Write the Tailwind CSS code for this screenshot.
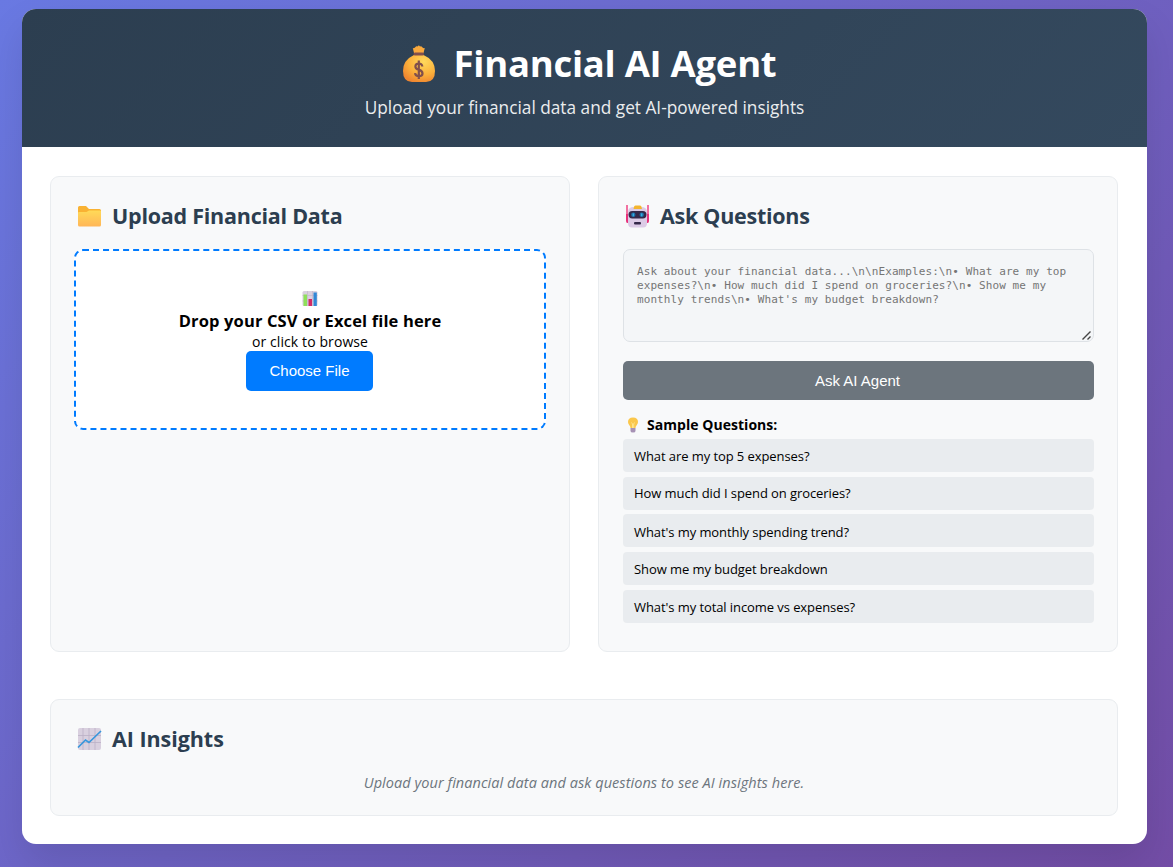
<!DOCTYPE html>
<html lang="en">
<head>
<meta charset="utf-8">
<title>Financial AI Agent</title>
<script src="https://cdn.jsdelivr.net/npm/@tailwindcss/browser@4"></script>
</head>
<body class="h-[867px] overflow-hidden bg-[linear-gradient(135deg,#6979e2_0%,#734da6_100%)] px-[22px] pt-[9px] font-['Open_Sans','Noto_Sans',sans-serif] text-black">
<main class="mr-[4px] h-[835px] overflow-hidden rounded-[14px] bg-white shadow-[0_19px_38px_rgba(0,0,0,0.1)]">
  <header class="h-[138px] bg-[linear-gradient(135deg,#2c3e50,#34495e)] pt-[28px] text-center text-white">
    <h1 class="flex h-[52px] items-center justify-center pl-[9px] text-[36.500px] leading-[52px] font-bold tracking-[-0.27px] whitespace-nowrap">
      <svg class="mt-px mr-[18px] h-[38px] w-[34px] shrink-0" viewBox="0 0 34 38">
        <defs><radialGradient id="bag" cx=".65" cy=".25" r=".8"><stop offset="0" stop-color="#ffd95c"/><stop offset=".6" stop-color="#fbb03b"/><stop offset="1" stop-color="#ef8630"/></radialGradient></defs>
        <path d="M12 8 10.800 3Q12.500 3.500 13.500 2Q14 .8 15.500 1.500Q16.800-.4 18 1.500Q19.500.8 20 2Q21 3.500 22.800 3L21.500 8Z" fill="#f9a93d"/>
        <path d="M12 10Q1 15 1 26Q1 37 10 37H24Q33 37 33 26Q33 15 21.500 10Z" fill="url(#bag)"/>
        <rect x="11.500" y="7.500" width="10.500" height="3" rx="1.500" fill="#81504c"/>
        <path d="M20.300 21.500Q20 18.500 16.800 18.500Q13.400 18.500 13.400 21.500Q13.400 24 16.800 24.800Q20.500 25.500 20.500 28.500Q20.500 31.200 17 31.200Q13.400 31.200 13 28.200M16.800 15.500V34" fill="none" stroke="#81504c" stroke-width="2.200"/>
      </svg>
      <span>Financial AI Agent</span>
    </h1>
    <p class="mt-[6px] text-[17.250px] leading-[25px] opacity-90">Upload your financial data and get AI-powered insights</p>
  </header>
  <div class="pt-[29px] pr-[29px] pl-[28px]">
    <div class="grid h-[476px] grid-cols-2 gap-[28px]">
      <section class="rounded-[9px] border border-[#e9ecef] bg-[#f8f9fa] px-[23px] pt-[23px]">
        <h2 class="flex h-[32px] items-center text-[21.500px] leading-8 font-bold tracking-[-0.24px] text-[#2c3e50]">
          <svg class="mr-[10px] ml-[3px] h-[24px] w-[25px]" viewBox="0 0 25 24"><defs><linearGradient id="fold" x2="0" y2="1"><stop stop-color="#ffda58"/><stop offset="1" stop-color="#ffb657"/></linearGradient></defs><path d="M1 3.500Q1 2 2.500 2H9L12 5H22.500Q24 5 24 6.500V12H1Z" fill="#f9b233"/><path d="M1 9Q1 8 2 8H9.500L12 6.500H23Q24 6.500 24 7.500V21Q24 22.500 22.500 22.500H2.500Q1 22.500 1 21Z" fill="url(#fold)"/></svg>
          <span>Upload Financial Data</span>
        </h2>
        <div class="mt-[17px] flex h-[181px] flex-col items-center rounded-[9px] border-2 border-dashed border-[#007bff] bg-white pt-[39px]">
          <svg class="mr-px h-[17px] w-[16px]" viewBox="0 0 16 17"><rect x=".5" y="1" width="15" height="15" rx="1.500" fill="#d9d0df"/><path d="M5.500 1V16M10.500 1V16M.5 5.500H15.500M.5 11H15.500" stroke="#bfb4c8" stroke-width=".6"/><path d="M1.500 4.500H5V16H1.500Z" fill="#8fe05a"/><path d="M6.500 9H10V16H6.500Z" fill="#d32a64"/><path d="M11.500 2.500H14.800V16H11.500Z" fill="#3288d6"/></svg>
          <p class="mt-[2px] text-[16.500px] leading-[23px] font-bold tracking-[0.14px]">Drop your CSV or Excel file here</p>
          <p class="text-[14px] leading-[19px] tracking-[0.1px]">or click to browse</p>
          <button class="mr-px h-[40px] w-[127px] rounded-[5px] bg-[#007bff] font-['Liberation_Sans',sans-serif] text-[15px] text-white">Choose File</button>
        </div>
      </section>
      <section class="rounded-[9px] border border-[#e9ecef] bg-[#f8f9fa] pt-[23px] pr-[23px] pl-[24px]">
        <h2 class="flex h-[32px] items-center text-[21.500px] leading-8 font-bold tracking-[-0.27px] text-[#2c3e50]">
          <svg class="mr-[10px] ml-[2px] h-[24px] w-[25px]" viewBox="0 0 25 24"><path d="M2 1V17M23 1V17" stroke="#f04383" stroke-width="1.500"/><path d="M1 10H4V19H2.500Q1 19 1 17ZM24 10H21V19H22.500Q24 19 24 17Z" fill="#e8327b"/><path d="M3 8Q3 3 9 3H16Q22 3 22 8V19Q22 23.500 18 23.500H7Q3 23.500 3 19Z" fill="#dccbe6"/><path d="M9 3Q9 1.500 10.500 1.500H15Q16.500 1.500 16.500 3L17 5H8.500Z" fill="#f4b52e"/><rect x="3.500" y="7" width="18" height="7.500" rx="3.700" fill="#35294a"/><circle cx="8.300" cy="10.800" r="2.200" fill="#216fa6"/><circle cx="16.700" cy="10.800" r="2.200" fill="#216fa6"/><path d="M8.300 9.500V12.300M16.700 9.500V12.300" stroke="#38b5eb" stroke-width="1.200"/><rect x="9" y="18" width="7" height="2.500" rx="1" fill="#35294a"/></svg>
          <span>Ask Questions</span>
        </h2>
        <div class="relative mt-[17px] h-[93px] rounded-[7px] border border-[#dee2e6] bg-[#f4f6f8] px-[13px] pt-[15px] font-['DejaVu_Sans_Mono',monospace] text-[11px] leading-[14px] tracking-[0.085px] whitespace-nowrap text-[#757575]">
          Ask about your financial data...\n\nExamples:\n• What are my top<br>expenses?\n• How much did I spend on groceries?\n• Show me my<br>monthly trends\n• What's my budget breakdown?
          <svg class="absolute right-[1px] bottom-0 h-[11px] w-[11px]" viewBox="0 0 11 11"><path d="M1.500 9.500 9.500 1.500M6.500 9.500 9.500 6.500" stroke="#454545" stroke-width="1.400"/></svg>
        </div>
        <button class="mt-[19px] block h-[39px] w-full rounded-[5px] bg-[#6c757d] pt-px pr-[2px] font-['Liberation_Sans',sans-serif] text-[15px] text-white">Ask AI Agent</button>
        <h3 class="mt-[14px] flex h-[21px] items-center text-[14px] leading-[21px] font-bold">
          <svg class="mr-[6px] ml-[2px] h-[16px] w-[16px]" viewBox="0 0 16 16"><path d="M5.500 11Q5.500 9.500 4.200 8Q3 6.500 3 5Q3 .5 8 .5Q13 .5 13 5Q13 6.500 11.800 8Q10.500 9.500 10.500 11Z" fill="#fbc74b"/><path d="M6.500 5.500 7.500 7V11M9.500 5.500 8.700 7V11" stroke="#fff0a8" stroke-width=".7" fill="none"/><path d="M5.500 11H10.500V14Q10.500 15.500 8 15.500Q5.500 15.500 5.500 14Z" fill="#a792b5"/></svg>
          <span class="tracking-[0.04px]">Sample Questions:</span>
        </h3>
        <ul class="mt-[4px] flex flex-col gap-[4.700px] text-[13px] tracking-[-0.08px]">
          <li class="flex h-[33px] items-center rounded-[4px] bg-[#e9ecef] px-[11px] pt-[2px]">What are my top 5 expenses?</li>
          <li class="flex h-[33px] items-center rounded-[4px] bg-[#e9ecef] px-[11px] pt-[2px]">How much did I spend on groceries?</li>
          <li class="flex h-[33px] items-center rounded-[4px] bg-[#e9ecef] px-[11px] pt-[3px]">What's my monthly spending trend?</li>
          <li class="flex h-[33px] items-center rounded-[4px] bg-[#e9ecef] px-[11px] pt-[2px]">Show me my budget breakdown</li>
          <li class="flex h-[33px] items-center rounded-[4px] bg-[#e9ecef] px-[11px] pt-[2px]">What's my total income vs expenses?</li>
        </ul>
      </section>
    </div>
    <section class="mt-[47px] h-[117px] rounded-[9px] border border-[#e9ecef] bg-[#f8f9fa] px-[23px] pt-[23px]">
      <h2 class="flex h-[32px] items-center text-[21.500px] leading-8 font-bold tracking-[-0.05px] text-[#2c3e50]">
        <svg class="mr-[10px] ml-[3px] h-[24px] w-[25px]" viewBox="0 0 25 24"><rect x="1" y="1" width="23" height="22" rx="2" fill="#d9d0df"/><path d="M6 1V23M12 1V23M18 1V23M1 8.500H24M1 15.500H24" stroke="#bbb0c5" stroke-width=".8"/><path d="M1 20.500 8.500 13 12 15.500 24 4" fill="none" stroke="#3796dc" stroke-width="1.700"/></svg>
        <span>AI Insights</span>
      </h2>
      <p class="mt-[16px] text-center text-[14.500px] leading-6 tracking-[0.06px] text-[#6c757d] italic">Upload your financial data and ask questions to see AI insights here.</p>
    </section>
  </div>
</main>
</body>
</html>
